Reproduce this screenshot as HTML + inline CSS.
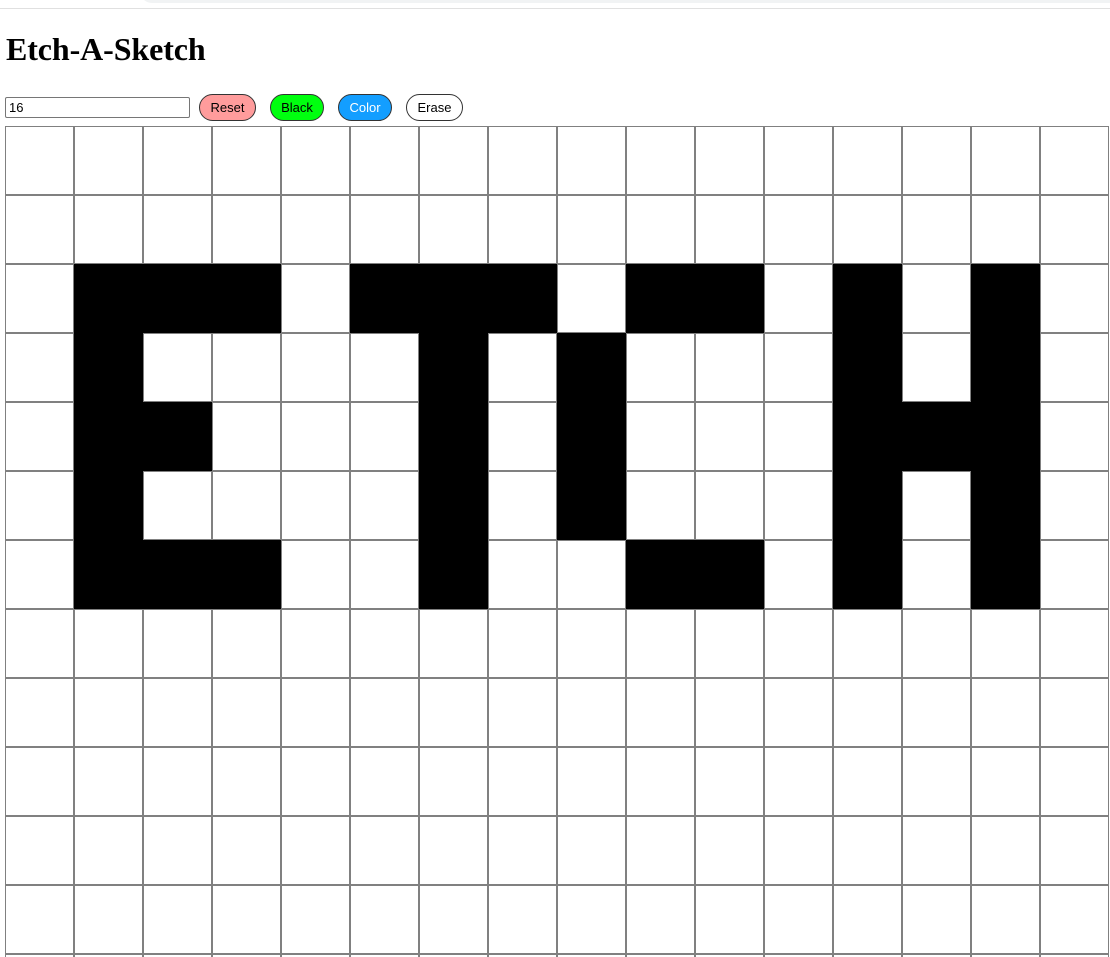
<!DOCTYPE html>
<html style="overflow:hidden"><head><style>
html,body{height:957px;overflow:hidden}
body{margin:0;background:#fff;font-family:"Liberation Serif",serif;position:relative;width:1110px}
.bar{position:absolute;left:140px;top:-10px;width:1000px;height:13px;background:#f1f3f4;border-radius:0 0 0 12px}
.line{position:absolute;left:0;top:8px;width:1110px;height:1px;background:#e0e0e0}
h1{position:absolute;left:6px;top:31px;margin:0;font-size:32px;font-weight:bold;letter-spacing:-0.1px}
input{position:absolute;left:5px;top:97px;width:185px;height:21px;box-sizing:border-box;border:1px solid #767676;border-radius:2px;font-size:13px;padding:1px 3px;font-family:"Liberation Sans",sans-serif}
.b{position:absolute;top:94px;height:27px;box-sizing:border-box;border:1px solid #333;border-radius:14px;font-family:"Liberation Sans",sans-serif;font-size:13px;line-height:25px;text-align:center}
#g{position:absolute;left:5px;top:126px;width:1104px;height:831px;overflow:hidden}
.c{position:absolute;width:69px;height:69px;box-sizing:border-box;border:1px solid #808080;background:#fff}
.k{background:#000;border-color:#000}
</style></head><body>
<div class="bar"></div><div class="line"></div>
<h1>Etch-A-Sketch</h1>
<input value="16">
<div class="b" style="left:199px;width:57px;background:#ff9c9c">Reset</div>
<div class="b" style="left:270px;width:54px;background:#00ff0f">Black</div>
<div class="b" style="left:338px;width:54px;background:#139eff;color:#fff">Color</div>
<div class="b" style="left:406px;width:57px;background:#fff">Erase</div>
<div id="g"></div>
<script>
var blk={2:[1,2,3,5,6,7,9,10,12,14],3:[1,6,8,12,14],4:[1,2,6,8,12,13,14],5:[1,6,8,12,14],6:[1,2,3,6,9,10,12,14]};
var h='';
for(var r=0;r<13;r++)for(var c=0;c<16;c++){
var k=blk[r]&&blk[r].indexOf(c)>=0;
h+='<div class="c'+(k?' k':'')+'" style="left:'+(c*69)+'px;top:'+(r*69)+'px"></div>';}
document.getElementById('g').innerHTML=h;
</script>
</body></html>
